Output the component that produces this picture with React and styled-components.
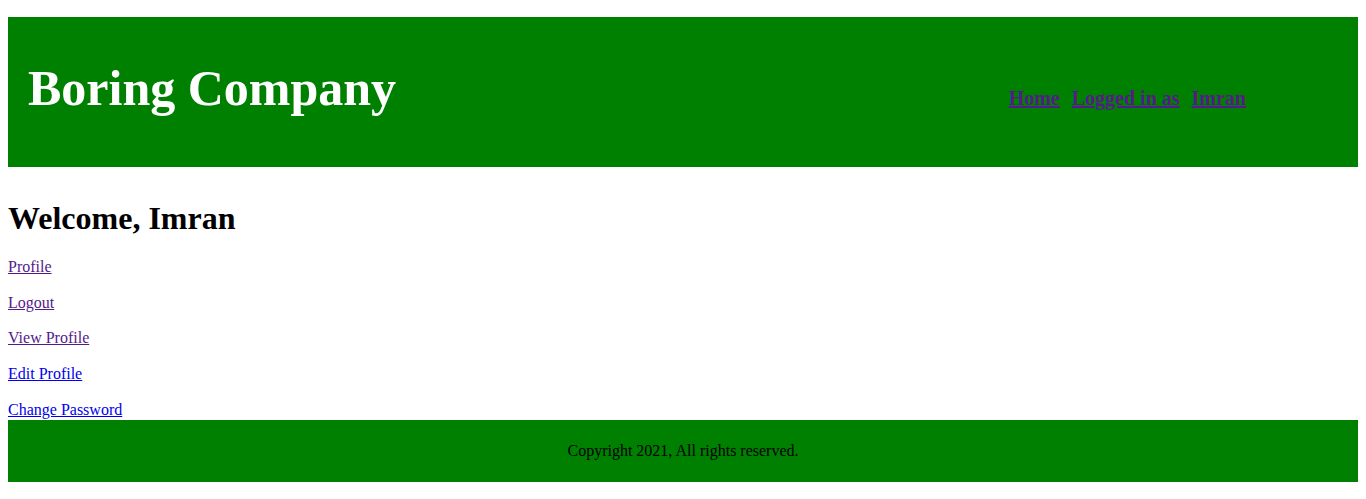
import React from "react";
import styled, { createGlobalStyle } from "styled-components";

const GlobalStyle = createGlobalStyle`
  body {
    margin: 8px;
    font-family: "Liberation Serif", "Times New Roman", serif;
    font-size: 16px;
    color: #000;
    background: #fff;
  }
`;

const Header = styled.header`
  display: flex;
  align-items: baseline;
  justify-content: space-between;
  box-sizing: border-box;
  height: 150px;
  margin-top: 9px;
  padding: 42px 112px 0 20px;
  background: green;
`;

const Title = styled.h1`
  margin: 0;
  font-size: 50px;
  line-height: 58px;
  font-weight: bold;
  color: #fff;
`;

const Nav = styled.nav`
  display: flex;
  gap: 12px;
`;

const NavLink = styled.a`
  font-size: 20px;
  font-weight: bold;
  line-height: 24px;
  color: #551a8b;
  text-decoration: underline;
`;

const Main = styled.main`
  display: flex;
  flex-direction: column;
  align-items: flex-start;
`;

const Welcome = styled.h1`
  margin: 33px 0 21px;
  font-size: 32px;
  line-height: 36px;
  font-weight: bold;
`;

const LinkList = styled.div`
  display: flex;
  flex-direction: column;
  align-items: flex-start;
  gap: 15.7px;
`;

const MenuLink = styled.a`
  line-height: 20px;
  color: ${(p) => (p.$visited ? "#551a8b" : "#0000ee")};
  text-decoration: underline;
`;

const Footer = styled.footer`
  box-sizing: border-box;
  height: 62px;
  padding-top: 21px;
  background: green;
  text-align: center;
  line-height: 20px;
`;

const menu = [
  { label: "Profile", visited: true },
  { label: "Logout", visited: true },
  { label: "View Profile", visited: true },
  { label: "Edit Profile", visited: false },
  { label: "Change Password", visited: false },
];

export default function App() {
  return (
    <>
      <GlobalStyle />
      <Header>
        <Title>Boring Company</Title>
        <Nav>
          <NavLink href="#">Home</NavLink>
          <NavLink href="#">Logged in as</NavLink>
          <NavLink href="#">Imran</NavLink>
        </Nav>
      </Header>
      <Main>
        <Welcome>Welcome, Imran</Welcome>
        <LinkList>
          {menu.map((m) => (
            <MenuLink key={m.label} href="#" $visited={m.visited}>
              {m.label}
            </MenuLink>
          ))}
        </LinkList>
      </Main>
      <Footer>Copyright 2021, All rights reserved.</Footer>
    </>
  );
}
